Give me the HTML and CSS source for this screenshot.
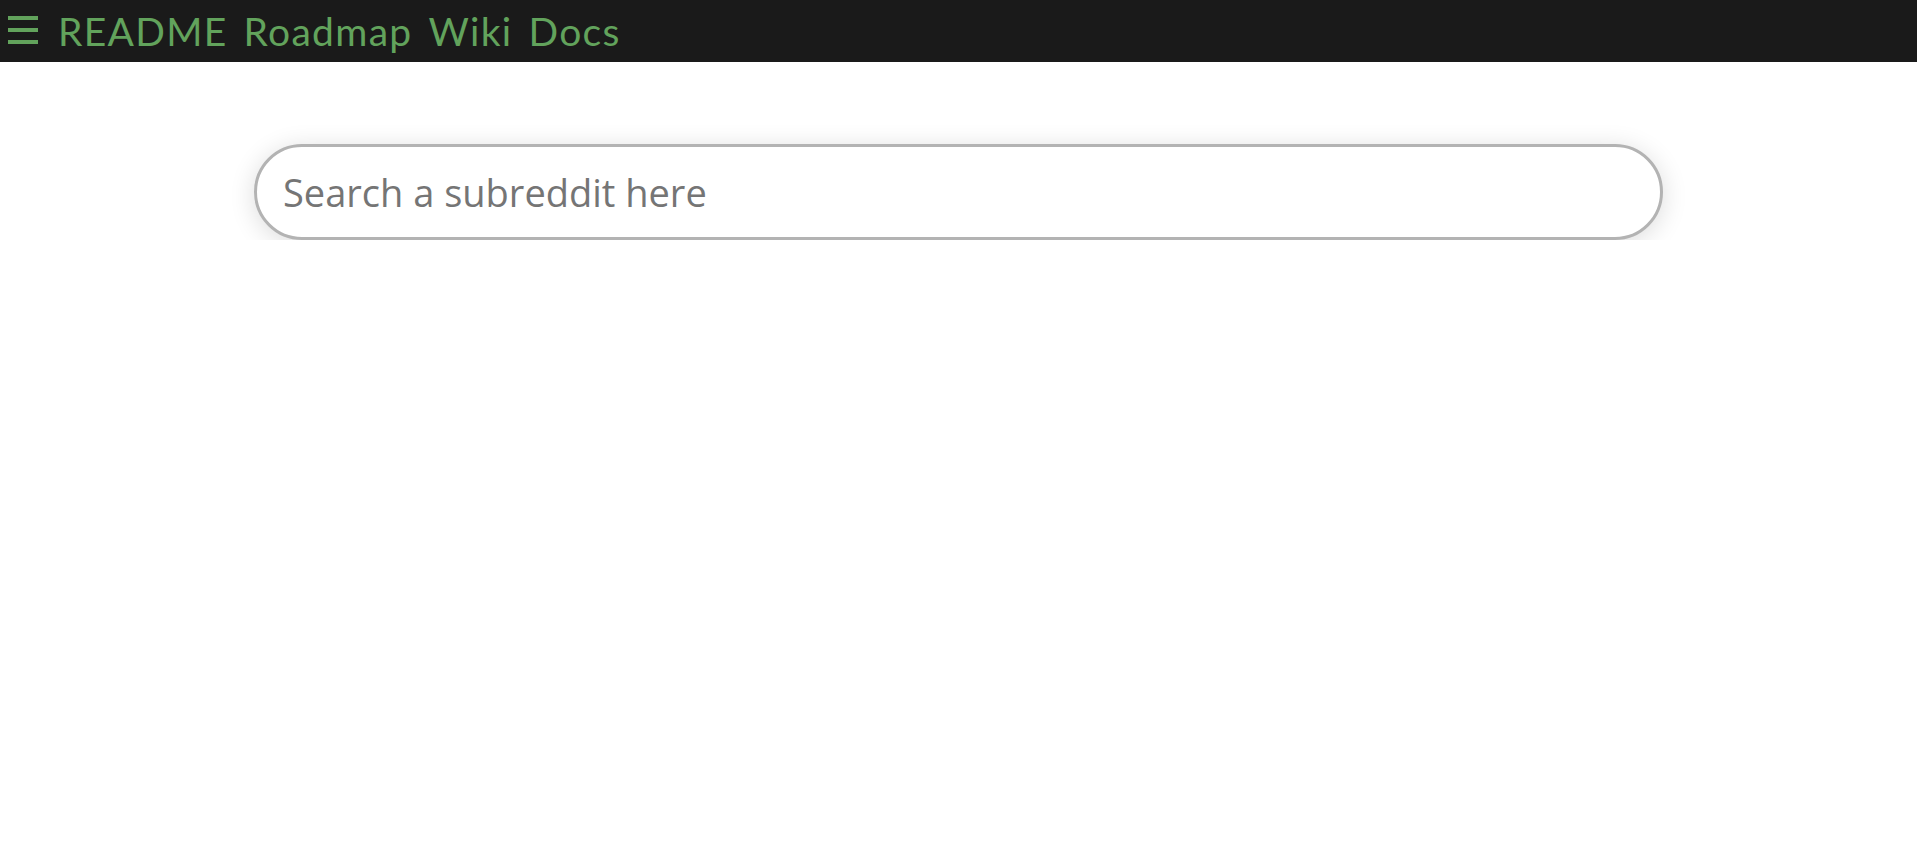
FILE: index.html
```html
<!DOCTYPE html>
<html>
<head>
<meta charset="utf-8">
<link rel="stylesheet" href="styles.css">
</head>
<body>
<header class="topbar">
  <span class="menu-icon" aria-label="menu">
    <svg width="30" height="28" viewBox="0 0 30 28"><rect x="0" y="0" width="30" height="4" fill="#62a35c"/><rect x="0" y="12" width="30" height="4" fill="#62a35c"/><rect x="0" y="24" width="30" height="4" fill="#62a35c"/></svg>
  </span>
  <nav class="nav">
    <a class="nav-link" href="#">README</a>
    <a class="nav-link" href="#">Roadmap</a>
    <a class="nav-link" href="#">Wiki</a>
    <a class="nav-link" href="#">Docs</a>
  </nav>
</header>
<main class="main">
  <input class="search" type="text" placeholder="Search a subreddit here">
</main>
</body>
</html>
```
FILE: styles.css
```css
html, body {
  margin: 0;
  padding: 0;
  background: #ffffff;
}
.topbar {
  height: 62px;
  background: #1a1a1a;
  display: flex;
  align-items: center;
  padding-left: 8px;
  box-sizing: border-box;
}
.menu-icon {
  display: flex;
  align-items: center;
  margin-right: 20px;
  margin-top: -2px;
}
.nav {
  display: flex;
  gap: 16px;
}
.nav-link {
  font-family: "Lato", "Noto Sans", sans-serif;
  font-size: 39px;
  letter-spacing: 1.3px;
  color: #62a35c;
  text-decoration: none;
  line-height: 62px;
}
.main {
  display: flex;
  justify-content: center;
  padding-top: 82px;
}
.search {
  width: 1409px;
  height: 96px;
  box-sizing: border-box;
  border: 3px solid #b3b3b3;
  border-radius: 48px;
  padding: 0 26px;
  font-family: "Open Sans", "Noto Sans", sans-serif;
  font-size: 38px;
  color: #333;
  outline: none;
  box-shadow: 0 4px 26px rgba(0, 0, 0, 0.14);
  background: #fff;
}
.search::placeholder {
  color: #757575;
}
```
